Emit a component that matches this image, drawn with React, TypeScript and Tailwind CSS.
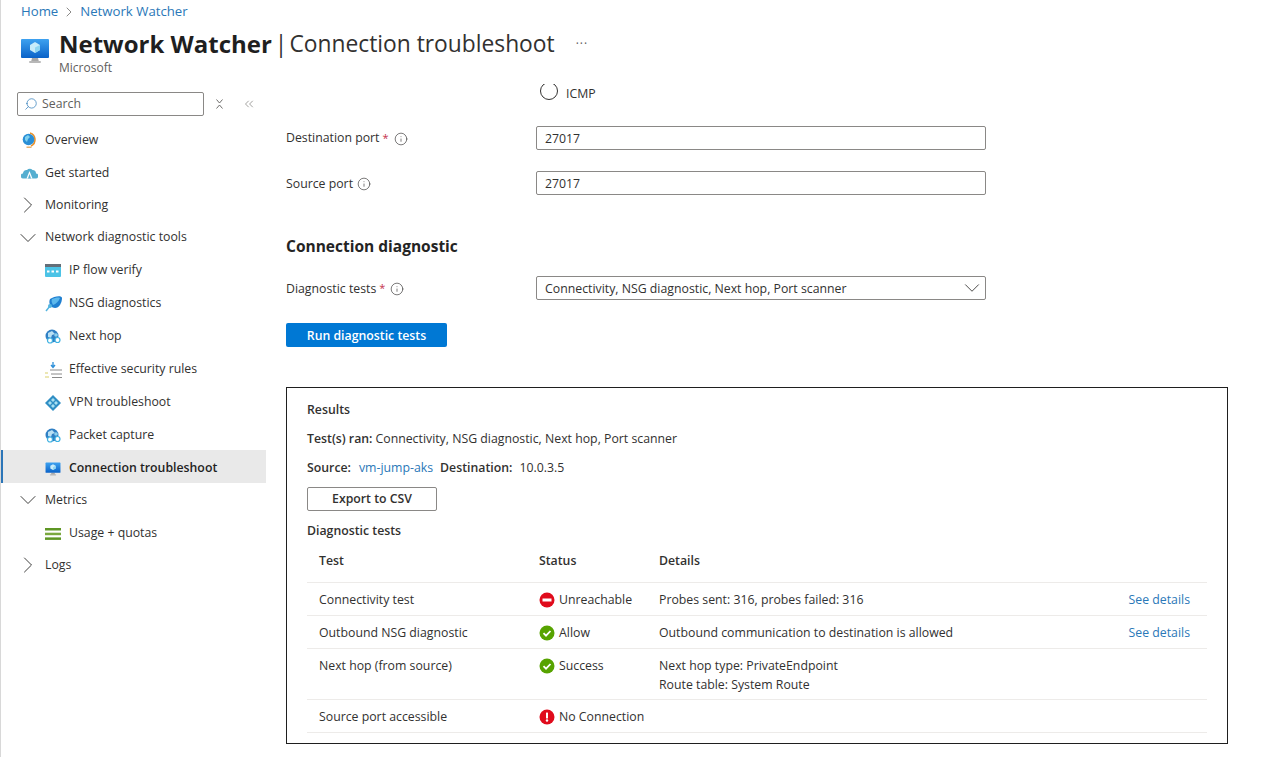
import { ChevronDown, ChevronRight, ChevronsLeft, Search, Info } from "lucide-react"

const font = "font-['Open_Sans',sans-serif]"

function MonitorIcon({ size = 30 }: { size?: number }) {
  return (
    <svg width={size} height={size} viewBox="0 0 30 30">
      <defs>
        <linearGradient id="mon" x1="0" y1="0" x2="0" y2="1">
          <stop offset="0" stopColor="#3ea2f0" />
          <stop offset="1" stopColor="#0a62c8" />
        </linearGradient>
      </defs>
      <path d="M12 22h6l1 4h-8z" fill="#a8a8a8" />
      <rect x="9" y="25" width="12" height="2" rx="1" fill="#b8b8b8" />
      <rect x="1" y="3" width="28" height="19" rx="1" fill="url(#mon)" />
      <path d="M15 6l5 3v5l-5 3-5-3V9z" fill="#c8ecfa" />
      <path d="M15 11.500l5-2.500v5l-5 3z" fill="#8fd6f2" />
    </svg>
  )
}

function GlobeIcon() {
  return (
    <svg width="16" height="17" viewBox="0 0 16 17">
      <path d="M9 1a7 7 0 0 1 1 13" fill="none" stroke="#e8912c" strokeWidth="1.600" />
      <circle cx="7.500" cy="7.500" r="5.800" fill="#2a8fd6" />
      <path d="M4 5l3-2 2 2-2 2-1 3-2-2z" fill="#7fd0ee" />
      <rect x="5.500" y="14.500" width="5" height="1.500" fill="#e8b070" />
    </svg>
  )
}

function CloudIcon() {
  return (
    <svg width="17" height="12" viewBox="0 0 17 12">
      <path d="M2.500 11.500a2.500 2.500 0 0 1-.5-5 3.500 3.500 0 0 1 4-3.500 3.500 3.500 0 0 1 5.500 0 3.500 3.500 0 0 1 3.500 3.500 2.500 2.500 0 0 1-.5 5z" fill="#54aed0" />
      <path d="M8.500 4l-3 7.500h6z" fill="#ffffff" />
      <path d="M8.500 7l-1.500 4.500h3z" fill="#54aed0" />
    </svg>
  )
}

function FlowIcon() {
  return (
    <svg width="16" height="13" viewBox="0 0 16 13">
      <rect width="16" height="13" rx="1" fill="#4cc3e6" />
      <rect width="16" height="3" fill="#636e78" />
      <rect x="2" y="6.500" width="2.500" height="2" fill="#fff" />
      <rect x="6.500" y="6.500" width="2.500" height="2" fill="#fff" />
      <rect x="11" y="6.500" width="2.500" height="2" fill="#fff" />
    </svg>
  )
}

function NsgIcon() {
  return (
    <svg width="17" height="16" viewBox="0 0 17 16">
      <path d="M5 3c4-3 12-4 12-1 0 5-3 10-7 10-4 0-7-4-5-9z" fill="#1f7fd0" />
      <path d="M7 3c3-1 6-2 8-1-1 3-4 6-7 7-1-2-2-4-1-6z" fill="#5cb8ec" />
      <path d="M5 10l-4 5" stroke="#52b4e0" strokeWidth="1.500" />
      <circle cx="5" cy="10" r="2" fill="#52b4e0" />
    </svg>
  )
}

function HopIcon() {
  return (
    <svg width="16" height="16" viewBox="0 0 16 16">
      <circle cx="7" cy="7" r="6.500" fill="#2f7fc4" />
      <path d="M3 4l4-2 3 3-3 1-1 3-3-1z" fill="#b9e0f4" />
      <circle cx="5" cy="11.500" r="2.500" fill="#fff" stroke="#3fb2e2" strokeWidth="1.200" />
      <circle cx="12.500" cy="11" r="2.500" fill="#fff" stroke="#3fb2e2" strokeWidth="1.200" />
      <circle cx="11" cy="6" r="1.800" fill="#8bd0ee" />
    </svg>
  )
}

function RulesIcon() {
  return (
    <svg width="17" height="16" viewBox="0 0 17 16">
      <path d="M8 0v5M6 3l2 2.500L10 3" fill="none" stroke="#2d8fd8" strokeWidth="1.300" />
      <path d="M5 8h12M6 12h11M7 15.500h10" stroke="#8a8a8a" strokeWidth="1" />
      <path d="M0 11h3M0 15h4" stroke="#d9cf6a" strokeWidth="1.200" />
    </svg>
  )
}

function VpnIcon() {
  return (
    <svg width="16" height="16" viewBox="0 0 16 16">
      <path d="M8 0l8 8-8 8-8-8z" fill="#2f8ec4" />
      <path d="M8 3l2 2-2 2-2-2zM3 8l2-2 2 2-2 2zM9 8l2-2 2 2-2 2zM8 9l2 2-2 2-2-2z" fill="#a8e0f2" />
    </svg>
  )
}

function UsageIcon() {
  return (
    <svg width="16" height="12" viewBox="0 0 16 12">
      <rect width="16" height="2.500" fill="#5e9624" />
      <rect y="4.700" width="16" height="2.500" fill="#7aa83e" />
      <rect y="9.400" width="16" height="2.500" fill="#5e9624" />
    </svg>
  )
}

function StatusIcon({ kind }: { kind: string }) {
  if (kind === "ok") {
    return (
      <svg width="16" height="16" viewBox="0 0 16 16">
        <circle cx="8" cy="8" r="7.500" fill="#57a300" />
        <path d="M4.500 8.200l2.500 2.500 4.500-4.700" fill="none" stroke="#fff" strokeWidth="1.800" />
      </svg>
    )
  }
  if (kind === "stop") {
    return (
      <svg width="16" height="16" viewBox="0 0 16 16">
        <circle cx="8" cy="8" r="7.500" fill="#e00b1c" />
        <rect x="3.500" y="6.500" width="9" height="3" fill="#fff" />
      </svg>
    )
  }
  return (
    <svg width="16" height="16" viewBox="0 0 16 16">
      <circle cx="8" cy="8" r="7.500" fill="#e00b1c" />
      <rect x="7" y="3.500" width="2" height="6" rx="0.500" fill="#fff" />
      <circle cx="8" cy="11.500" r="1.200" fill="#fff" />
    </svg>
  )
}

function NavRow({ icon, label, active, extra = "h-[33px]" }: { icon: React.ReactNode; label: string; active?: boolean; extra?: string }) {
  return (
    <div className={`flex items-center ${extra} ${active ? "bg-[#e9e9e9] border-l-[2px] border-[#2b75b8] pl-[42px] font-semibold text-[#1f1f1f]" : "pl-[44px] text-[#323130]"}`}>
      <span className="w-[24px] flex items-center">{icon}</span>
      <span className="whitespace-nowrap">{label}</span>
    </div>
  )
}

function NavTop({ icon, label, h = "h-[32px]" }: { icon: React.ReactNode; label: string; h?: string }) {
  return (
    <div className={`flex items-center ${h} pl-[20px] text-[#323130]`}>
      <span className="w-[24px] flex items-center">{icon}</span>
      <span className="whitespace-nowrap">{label}</span>
    </div>
  )
}

function NavChevron({ open }: { open?: boolean }) {
  const cls = "shrink-0 -ml-[7px] -my-[6px] text-[#323130]"
  return open ? <ChevronDown size={28} strokeWidth={0.8} className={cls} /> : <ChevronRight size={28} strokeWidth={0.8} className={cls} />
}

function FormLabel({ text, required, top = "pt-[2px]" }: { text: string; required?: boolean; top?: string }) {
  return (
    <div className="w-[250px] flex items-center text-[#323130]">
      <span className={top}>{text}</span>
      {required && <span className="text-[#c4314b] text-[11px] ml-[3px]">*</span>}
      <Info size={14} strokeWidth={1.100} className={`${required ? "ml-[5px]" : "ml-[4px]"} mt-[2px] text-[#323130]`} />
    </div>
  )
}

const rows = [
  { test: "Connectivity test", kind: "stop", status: "Unreachable", details: ["Probes sent: 316, probes failed: 316"], link: true, h: "h-[33px]" },
  { test: "Outbound NSG diagnostic", kind: "ok", status: "Allow", details: ["Outbound communication to destination is allowed"], link: true, h: "h-[33px]" },
  { test: "Next hop (from source)", kind: "ok", status: "Success", details: ["Next hop type: PrivateEndpoint", "Route table: System Route"], link: false, h: "h-[51px]" },
  { test: "Source port accessible", kind: "err", status: "No Connection", details: [], link: false, h: "h-[33px]" },
]

export default function App() {
  return (
    <div className={`${font} h-[757px] w-[1266px] overflow-hidden bg-white text-[12.300px] border-l-[1px] border-[#d8d8d8] text-[#323130]`}>
      {/* Header */}
      <div className="pl-[20px] pt-[1px] h-[22px] flex items-center gap-[3px] text-[#2a78b8] text-[13.200px]">
        <span>Home</span>
        <ChevronRight size={16} strokeWidth={1.100} className="text-[#605e5c]" />
        <span>Network Watcher</span>
      </div>
      <div className="flex pl-[17px] pt-[6px] h-[70px]">
        <div className="w-[41px] pt-[8px] pl-[2px]"><MonitorIcon /></div>
        <div>
          <div className="flex items-center h-[32px] text-[#1f1f1f] whitespace-nowrap">
            <span className="text-[24px] font-bold">Network Watcher</span>
            <span className="text-[22.800px] ml-[3px] text-[#323130]">|</span>
            <span className="text-[22.800px] ml-[2px] pt-[1px] text-[#323130]">Connection troubleshoot</span>
            <span className="ml-[21px] text-[#605e5c] text-[12px] tracking-[1px]">···</span>
          </div>
          <div className="text-[12px] -mt-[1px] text-[#605e5c]">Microsoft</div>
        </div>
      </div>

      <div className="flex">
        {/* Sidebar */}
        <div className="w-[265px] shrink-0">
          <div className="flex items-center pl-[16px] h-[24px]">
            <div className="w-[187px] h-[24px] border border-[#8a8886] rounded-[2px] flex items-center pl-[6px] text-[#605e5c]">
              <Search size={14} strokeWidth={1.200} className="text-[#2a78b8] -scale-x-100 mr-[4px]" />
              <span>Search</span>
            </div>
            <svg width="7" height="10" viewBox="0 0 7 10" className="ml-[12px] text-[#605e5c]">
              <path d="M.5.500L3.500 4 6.500.500M.5 9.500L3.500 6l3 3.500" fill="none" stroke="currentColor" strokeWidth="0.9" />
            </svg>
            <ChevronsLeft size={14} strokeWidth={1} className="ml-[19px] text-[#605e5c]" />
          </div>
          <div className="mt-[8px]">
            <NavTop icon={<GlobeIcon />} label="Overview" h="h-[33px]" />
            <NavTop icon={<CloudIcon />} label="Get started" />
            <NavTop icon={<NavChevron />} label="Monitoring" />
            <NavTop icon={<NavChevron open />} label="Network diagnostic tools" h="h-[33px]" />
            <NavRow icon={<FlowIcon />} label="IP flow verify" />
            <NavRow icon={<NsgIcon />} label="NSG diagnostics" />
            <NavRow icon={<HopIcon />} label="Next hop" />
            <NavRow icon={<RulesIcon />} label="Effective security rules" />
            <NavRow icon={<VpnIcon />} label="VPN troubleshoot" />
            <NavRow icon={<HopIcon />} label="Packet capture" />
            <NavRow icon={<MonitorIcon size={16} />} label="Connection troubleshoot" active extra="h-[33px] -mt-[2px] pt-[4px]" />
            <NavTop icon={<NavChevron open />} label="Metrics" h="h-[33px] pt-[1px]" />
            <NavRow icon={<UsageIcon />} label="Usage + quotas" extra="h-[34px] pt-[1px]" />
            <NavTop icon={<NavChevron />} label="Logs" h="h-[30px]" />
          </div>
        </div>

        {/* Main */}
        <div className="pl-[20px] flex-1 min-w-0 -mt-[13px]">
          <div className="pl-[254px] h-[24px] flex items-start">
            <div className="mt-[5px] h-[16px] w-[18px] overflow-hidden">
              <div className="w-[18px] h-[18px] -mt-[2px] rounded-full border border-[#323130]" />
            </div>
            <span className="ml-[8px] mt-[6px] h-[18px] flex items-center">ICMP</span>
          </div>
          <div className="mt-[23px] flex items-center h-[24px]">
            <FormLabel text="Destination port" required top="pt-0" />
            <div className="w-[450px] h-[24px] border border-[#8a8886] rounded-[2px] px-[8px] pt-[2px] flex items-center">27017</div>
          </div>
          <div className="mt-[21px] flex items-center h-[24px]">
            <FormLabel text="Source port" />
            <div className="w-[450px] h-[24px] border border-[#8a8886] rounded-[2px] px-[8px] pt-[2px] flex items-center">27017</div>
          </div>
          <div className="mt-[39px] pt-[2px] text-[15.500px] font-bold text-[#242424] h-[24px] flex items-center">Connection diagnostic</div>
          <div className="mt-[18px] flex items-center h-[24px]">
            <FormLabel text="Diagnostic tests" required />
            <div className="w-[450px] h-[24px] border border-[#8a8886] rounded-[2px] pl-[8px] flex items-center justify-between">
              <span className="pt-[2px]">Connectivity, NSG diagnostic, Next hop, Port scanner</span>
              <ChevronDown size={26} strokeWidth={0.8} className="text-[#323130] shrink-0" />
            </div>
          </div>
          <div className="mt-[23px] w-[161px] h-[24px] pt-[2px] bg-[#0078d4] rounded-[2px] text-white flex items-center justify-center font-semibold">Run diagnostic tests</div>

          {/* Results */}
          <div className="mt-[40px] w-[942px] h-[357px] border border-[#1f1f1f] pl-[20px] pr-[20px] pt-[12px]">
            <div className="font-semibold h-[20px] flex items-center">Results</div>
            <div className="mt-[9px] h-[20px] flex items-center">
              <span className="font-semibold">Test(s) ran:</span>
              <span className="ml-[3px]">Connectivity, NSG diagnostic, Next hop, Port scanner</span>
            </div>
            <div className="mt-[9px] h-[20px] flex items-center">
              <span className="font-semibold">Source:</span>
              <span className="ml-[8px] text-[#2a78b8]">vm-jump-aks</span>
              <span className="ml-[7px] font-semibold">Destination:</span>
              <span className="ml-[7px]">10.0.3.5</span>
            </div>
            <div className="mt-[9px] w-[130px] h-[24px] border border-[#8a8886] rounded-[2px] flex items-center justify-center font-semibold">Export to CSV</div>
            <div className="mt-[10px] font-semibold h-[20px] flex items-center">Diagnostic tests</div>
            <div className="flex items-center h-[42px] pl-[12px] font-semibold border-b border-[#edebe9]">
              <span className="w-[220px]">Test</span>
              <span className="w-[120px]">Status</span>
              <span>Details</span>
            </div>
            {rows.map((r) => (
              <div key={r.test} className={`flex items-start ${r.h} pl-[12px] pt-[8px] border-b border-[#edebe9]`}>
                <span className="w-[220px] h-[18px] flex items-center">{r.test}</span>
                <span className="w-[120px] flex items-center h-[18px]">
                  <StatusIcon kind={r.kind} />
                  <span className="ml-[4px]">{r.status}</span>
                </span>
                <div className="flex-1">
                  {r.details.map((d) => (
                    <div key={d} className="h-[19px] flex items-center">{d}</div>
                  ))}
                </div>
                {r.link && <span className="text-[#2a78b8] h-[18px] flex items-center mr-[17px]">See details</span>}
              </div>
            ))}
          </div>
        </div>
      </div>
    </div>
  )
}
